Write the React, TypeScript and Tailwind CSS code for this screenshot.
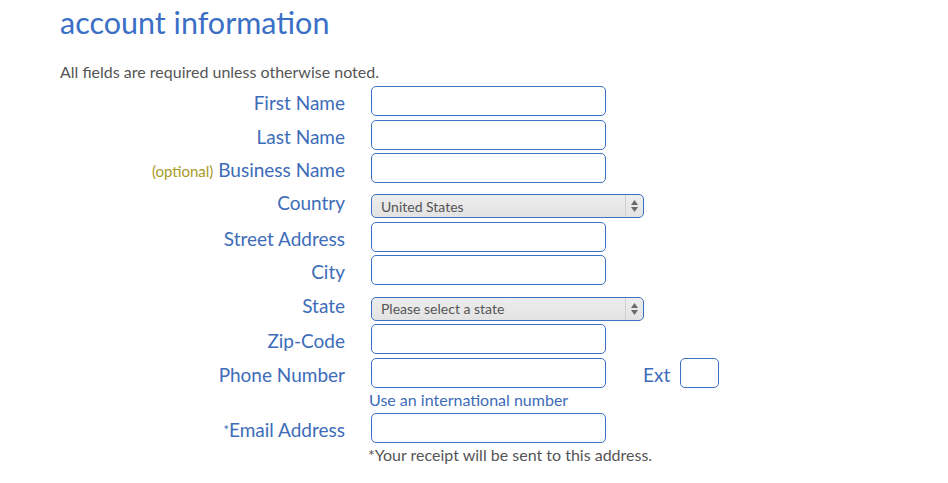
import type { ReactNode } from 'react';

const font = { fontFamily: 'Lato, "Open Sans", sans-serif' };

function TextBox({ className = 'w-[235px]' }: { className?: string }) {
  return (
    <div
      className={`h-[30px] rounded-[5px] border border-[#3d72c2] bg-white ${className}`}
    />
  );
}

function SelectBox({ value }: { value: string }) {
  return (
    <div className="flex h-[24px] w-[273px] items-stretch overflow-hidden rounded-[5px] border border-[#3d72c2] bg-gradient-to-b from-[#ededed] to-[#e3e3e3]">
      <div className="flex flex-1 items-center pl-[9px] text-[14px] text-[#555]">
        {value}
      </div>
      <div className="flex w-[18px] flex-col items-center justify-center gap-[2px] border-l border-[#d0d0d0]">
        <svg width="7" height="5" viewBox="0 0 7 5">
          <path d="M3.5 0 L7 5 L0 5 Z" fill="#6a6a6a" />
        </svg>
        <svg width="7" height="5" viewBox="0 0 7 5">
          <path d="M0 0 L7 0 L3.5 5 Z" fill="#6a6a6a" />
        </svg>
      </div>
    </div>
  );
}

function Row({
  label,
  children,
  className = '',
  labelClass = 'pt-[5px]',
}: {
  label: ReactNode;
  children: ReactNode;
  className?: string;
  labelClass?: string;
}) {
  return (
    <div className={`flex items-start gap-[26px] ${className}`}>
      <div
        className={`w-[285px] text-right text-[19px] leading-[24px] text-[#3d6cb9] ${labelClass}`}
      >
        {label}
      </div>
      <div>{children}</div>
    </div>
  );
}

export default function App() {
  return (
    <div className="min-h-screen bg-white pl-[60px]" style={font}>
      <h1 className="pt-[2px] text-[30.5px] leading-[40px] font-normal text-[#3b6fc6]">
        account information
      </h1>
      <p className="mt-[20px] text-[16px] leading-[20px] text-[#555]">
        All fields are required unless otherwise noted.
      </p>

      <div className="mt-[4px] flex flex-col gap-[3.5px]">
        <Row label="First Name">
          <TextBox />
        </Row>
        <Row label="Last Name">
          <TextBox />
        </Row>
        <Row
          label={
            <>
              <span className="text-[15px] text-[#a89a1e]">(optional)</span>{' '}
              Business Name
            </>
          }
        >
          <TextBox />
        </Row>
        <Row label="Country" className="pt-[7.5px]" labelClass="-mt-[3px]">
          <SelectBox value="United States" />
        </Row>
        <Row label="Street Address">
          <TextBox />
        </Row>
        <Row label="City">
          <TextBox />
        </Row>
        <Row label="State" className="pt-[8px]" labelClass="-mt-[3px]">
          <SelectBox value="Please select a state" />
        </Row>
        <Row label="Zip-Code">
          <TextBox />
        </Row>
        <Row label="Phone Number">
          <div className="flex items-start">
            <TextBox />
            <span className="ml-[37px] pt-[5px] text-[19px] leading-[24px] text-[#3d6cb9]">
              Ext
            </span>
            <TextBox className="ml-[10px] w-[39px]" />
          </div>
          <p className="mt-[2px] -ml-[2px] text-[16px] leading-[20px] text-[#3d6cb9]">
            Use an international number
          </p>
        </Row>
        <Row
          label={
            <>
              <span className="align-top text-[13px]">*</span>Email Address
            </>
          }
        >
          <TextBox />
          <p className="mt-[2px] -ml-[3px] text-[16px] leading-[20px] text-[#555]">
            *Your receipt will be sent to this address.
          </p>
        </Row>
      </div>
    </div>
  );
}
